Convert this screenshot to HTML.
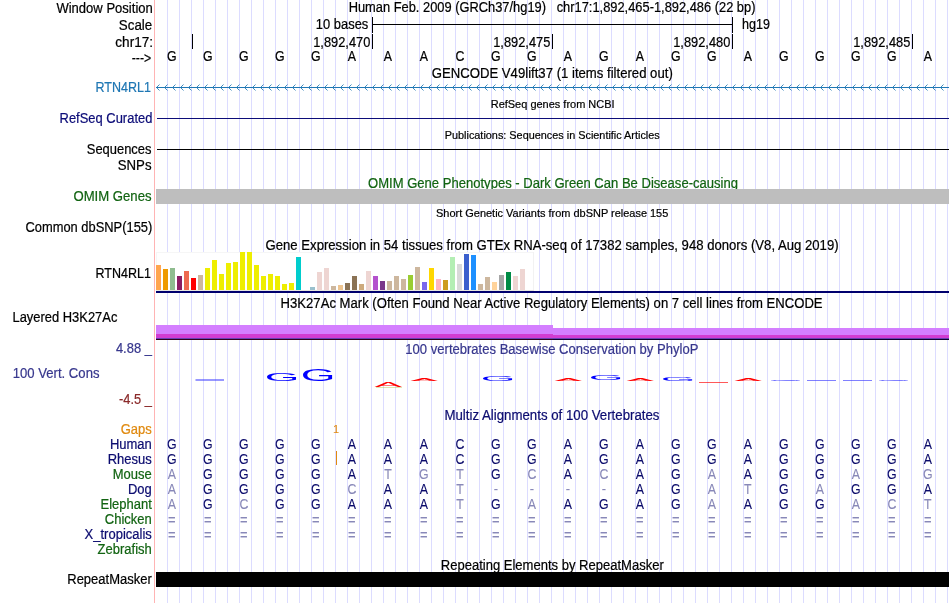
<!DOCTYPE html>
<html><head><meta charset="utf-8"><title>UCSC Genome Browser chr17:1,892,465-1,892,486</title>
<style>
html,body{margin:0;padding:0;background:#fff;}
body{width:950px;height:603px;overflow:hidden;}
svg{display:block;will-change:transform;font-family:"Liberation Sans", Arial, Helvetica, sans-serif;}
text{stroke-width:0.2px;}
text.t{stroke-width:0.08px;}
</style></head><body>
<svg width="950" height="603" viewBox="0 0 950 603">
<rect width="950" height="603" fill="#fff"/>
<g shape-rendering="crispEdges">
<rect x="154" y="0" width="1" height="603" fill="#ffb4b4"/>
<rect x="167" y="0" width="1" height="603" fill="#dcdcff"/>
<rect x="179" y="0" width="1" height="603" fill="#dcdcff"/>
<rect x="191" y="0" width="1" height="603" fill="#dcdcff"/>
<rect x="203" y="0" width="1" height="603" fill="#dcdcff"/>
<rect x="215" y="0" width="1" height="603" fill="#dcdcff"/>
<rect x="227" y="0" width="1" height="603" fill="#dcdcff"/>
<rect x="239" y="0" width="1" height="603" fill="#dcdcff"/>
<rect x="251" y="0" width="1" height="603" fill="#dcdcff"/>
<rect x="263" y="0" width="1" height="603" fill="#dcdcff"/>
<rect x="275" y="0" width="1" height="603" fill="#dcdcff"/>
<rect x="287" y="0" width="1" height="603" fill="#dcdcff"/>
<rect x="299" y="0" width="1" height="603" fill="#dcdcff"/>
<rect x="311" y="0" width="1" height="603" fill="#dcdcff"/>
<rect x="323" y="0" width="1" height="603" fill="#dcdcff"/>
<rect x="335" y="0" width="1" height="603" fill="#dcdcff"/>
<rect x="347" y="0" width="1" height="603" fill="#dcdcff"/>
<rect x="359" y="0" width="1" height="603" fill="#dcdcff"/>
<rect x="371" y="0" width="1" height="603" fill="#dcdcff"/>
<rect x="383" y="0" width="1" height="603" fill="#dcdcff"/>
<rect x="395" y="0" width="1" height="603" fill="#dcdcff"/>
<rect x="407" y="0" width="1" height="603" fill="#dcdcff"/>
<rect x="419" y="0" width="1" height="603" fill="#dcdcff"/>
<rect x="431" y="0" width="1" height="603" fill="#dcdcff"/>
<rect x="443" y="0" width="1" height="603" fill="#dcdcff"/>
<rect x="455" y="0" width="1" height="603" fill="#dcdcff"/>
<rect x="467" y="0" width="1" height="603" fill="#dcdcff"/>
<rect x="479" y="0" width="1" height="603" fill="#dcdcff"/>
<rect x="491" y="0" width="1" height="603" fill="#dcdcff"/>
<rect x="503" y="0" width="1" height="603" fill="#dcdcff"/>
<rect x="515" y="0" width="1" height="603" fill="#dcdcff"/>
<rect x="527" y="0" width="1" height="603" fill="#dcdcff"/>
<rect x="539" y="0" width="1" height="603" fill="#dcdcff"/>
<rect x="551" y="0" width="1" height="603" fill="#dcdcff"/>
<rect x="563" y="0" width="1" height="603" fill="#dcdcff"/>
<rect x="575" y="0" width="1" height="603" fill="#dcdcff"/>
<rect x="587" y="0" width="1" height="603" fill="#dcdcff"/>
<rect x="599" y="0" width="1" height="603" fill="#dcdcff"/>
<rect x="611" y="0" width="1" height="603" fill="#dcdcff"/>
<rect x="623" y="0" width="1" height="603" fill="#dcdcff"/>
<rect x="635" y="0" width="1" height="603" fill="#dcdcff"/>
<rect x="647" y="0" width="1" height="603" fill="#dcdcff"/>
<rect x="659" y="0" width="1" height="603" fill="#dcdcff"/>
<rect x="671" y="0" width="1" height="603" fill="#dcdcff"/>
<rect x="683" y="0" width="1" height="603" fill="#dcdcff"/>
<rect x="695" y="0" width="1" height="603" fill="#dcdcff"/>
<rect x="707" y="0" width="1" height="603" fill="#dcdcff"/>
<rect x="719" y="0" width="1" height="603" fill="#dcdcff"/>
<rect x="731" y="0" width="1" height="603" fill="#dcdcff"/>
<rect x="743" y="0" width="1" height="603" fill="#dcdcff"/>
<rect x="755" y="0" width="1" height="603" fill="#dcdcff"/>
<rect x="767" y="0" width="1" height="603" fill="#dcdcff"/>
<rect x="779" y="0" width="1" height="603" fill="#dcdcff"/>
<rect x="791" y="0" width="1" height="603" fill="#dcdcff"/>
<rect x="803" y="0" width="1" height="603" fill="#dcdcff"/>
<rect x="815" y="0" width="1" height="603" fill="#dcdcff"/>
<rect x="827" y="0" width="1" height="603" fill="#dcdcff"/>
<rect x="839" y="0" width="1" height="603" fill="#dcdcff"/>
<rect x="851" y="0" width="1" height="603" fill="#dcdcff"/>
<rect x="863" y="0" width="1" height="603" fill="#dcdcff"/>
<rect x="875" y="0" width="1" height="603" fill="#dcdcff"/>
<rect x="887" y="0" width="1" height="603" fill="#dcdcff"/>
<rect x="899" y="0" width="1" height="603" fill="#dcdcff"/>
<rect x="911" y="0" width="1" height="603" fill="#dcdcff"/>
<rect x="923" y="0" width="1" height="603" fill="#dcdcff"/>
<rect x="935" y="0" width="1" height="603" fill="#dcdcff"/>
<rect x="947" y="0" width="1" height="603" fill="#dcdcff"/>
</g>
<text x="56.4" y="13.0" font-size="13" fill="#000" stroke="#000" textLength="96.41" lengthAdjust="spacingAndGlyphs" transform="matrix(1 0 0 1.055 0 -0.71)">Window Position</text>
<text x="118.83" y="30.5" font-size="13" fill="#000" stroke="#000" textLength="33.43" lengthAdjust="spacingAndGlyphs" transform="matrix(1 0 0 1.055 0 -1.68)">Scale</text>
<text x="115.26" y="47.0" font-size="13" fill="#000" stroke="#000" textLength="37.86" lengthAdjust="spacingAndGlyphs" transform="matrix(1 0 0 1.055 0 -2.58)">chr17:</text>
<text x="131.7" y="62.8" font-size="13" fill="#000" stroke="#000" textLength="19.49" lengthAdjust="spacingAndGlyphs" transform="matrix(1 0 0 1.055 0 -3.45)">---&gt;</text>
<text x="348.68" y="12.5" font-size="13" fill="#000" stroke="#000" textLength="406.79" lengthAdjust="spacingAndGlyphs" style="white-space:pre" transform="matrix(1 0 0 1.055 0 -0.69)">Human Feb. 2009 (GRCh37/hg19)   chr17:1,892,465-1,892,486 (22 bp)</text>
<text x="315.77" y="29.0" font-size="13" fill="#000" stroke="#000" textLength="52.55" lengthAdjust="spacingAndGlyphs" transform="matrix(1 0 0 1.055 0 -1.59)">10 bases</text>
<text x="742.12" y="28.9" font-size="13" fill="#000" stroke="#000" textLength="28.0" lengthAdjust="spacingAndGlyphs" transform="matrix(1 0 0 1.055 0 -1.59)">hg19</text>
<g shape-rendering="crispEdges">
<rect x="372" y="17" width="1" height="16" fill="#000"/>
<rect x="732" y="17" width="1" height="16" fill="#000"/>
<rect x="372" y="24" width="361" height="1" fill="#000"/>
<rect x="192" y="34" width="1" height="15" fill="#000"/>
<rect x="372" y="34" width="1" height="15" fill="#000"/>
<rect x="552" y="34" width="1" height="15" fill="#000"/>
<rect x="732" y="34" width="1" height="15" fill="#000"/>
<rect x="912" y="34" width="1" height="15" fill="#000"/>
</g>
<text x="313.18" y="46.7" font-size="13" fill="#000" stroke="#000" textLength="57.13" lengthAdjust="spacingAndGlyphs" transform="matrix(1 0 0 1.055 0 -2.57)">1,892,470</text>
<text x="493.18" y="46.7" font-size="13" fill="#000" stroke="#000" textLength="57.13" lengthAdjust="spacingAndGlyphs" transform="matrix(1 0 0 1.055 0 -2.57)">1,892,475</text>
<text x="673.18" y="46.7" font-size="13" fill="#000" stroke="#000" textLength="57.13" lengthAdjust="spacingAndGlyphs" transform="matrix(1 0 0 1.055 0 -2.57)">1,892,480</text>
<text x="853.18" y="46.7" font-size="13" fill="#000" stroke="#000" textLength="57.13" lengthAdjust="spacingAndGlyphs" transform="matrix(1 0 0 1.055 0 -2.57)">1,892,485</text>
<g transform="scale(0.95 1.07)">
<text x="180.95" y="56.82" font-size="13" fill="#000" stroke="#000" text-anchor="middle">G</text>
<text x="218.84" y="56.82" font-size="13" fill="#000" stroke="#000" text-anchor="middle">G</text>
<text x="256.74" y="56.82" font-size="13" fill="#000" stroke="#000" text-anchor="middle">G</text>
<text x="294.63" y="56.82" font-size="13" fill="#000" stroke="#000" text-anchor="middle">G</text>
<text x="332.53" y="56.82" font-size="13" fill="#000" stroke="#000" text-anchor="middle">G</text>
<text x="370.42" y="56.82" font-size="13" fill="#000" stroke="#000" text-anchor="middle">A</text>
<text x="408.32" y="56.82" font-size="13" fill="#000" stroke="#000" text-anchor="middle">A</text>
<text x="446.21" y="56.82" font-size="13" fill="#000" stroke="#000" text-anchor="middle">A</text>
<text x="484.11" y="56.82" font-size="13" fill="#000" stroke="#000" text-anchor="middle">C</text>
<text x="522.0" y="56.82" font-size="13" fill="#000" stroke="#000" text-anchor="middle">G</text>
<text x="559.89" y="56.82" font-size="13" fill="#000" stroke="#000" text-anchor="middle">G</text>
<text x="597.79" y="56.82" font-size="13" fill="#000" stroke="#000" text-anchor="middle">A</text>
<text x="635.68" y="56.82" font-size="13" fill="#000" stroke="#000" text-anchor="middle">G</text>
<text x="673.58" y="56.82" font-size="13" fill="#000" stroke="#000" text-anchor="middle">A</text>
<text x="711.47" y="56.82" font-size="13" fill="#000" stroke="#000" text-anchor="middle">G</text>
<text x="749.37" y="56.82" font-size="13" fill="#000" stroke="#000" text-anchor="middle">G</text>
<text x="787.26" y="56.82" font-size="13" fill="#000" stroke="#000" text-anchor="middle">A</text>
<text x="825.16" y="56.82" font-size="13" fill="#000" stroke="#000" text-anchor="middle">G</text>
<text x="863.05" y="56.82" font-size="13" fill="#000" stroke="#000" text-anchor="middle">G</text>
<text x="900.95" y="56.82" font-size="13" fill="#000" stroke="#000" text-anchor="middle">G</text>
<text x="938.84" y="56.82" font-size="13" fill="#000" stroke="#000" text-anchor="middle">G</text>
<text x="976.74" y="56.82" font-size="13" fill="#000" stroke="#000" text-anchor="middle">A</text>
</g>
<text x="431.74" y="78.2" font-size="13" fill="#000" stroke="#000" textLength="241.04" lengthAdjust="spacingAndGlyphs" transform="matrix(1 0 0 1.055 0 -4.3)">GENCODE V49lift37 (1 items filtered out)</text>
<text x="95.5" y="92.0" font-size="13" fill="#1f77b4" stroke="#1f77b4" textLength="55.42" lengthAdjust="spacingAndGlyphs" transform="matrix(1 0 0 1.055 0 -5.06)">RTN4RL1</text>
<rect x="156" y="87" width="793" height="1" fill="#1f77b4" shape-rendering="crispEdges"/>
<path d="M159.5 84.5L156.5 87.5L159.5 90.5M167.5 84.5L164.5 87.5L167.5 90.5M175.5 84.5L172.5 87.5L175.5 90.5M183.5 84.5L180.5 87.5L183.5 90.5M191.5 84.5L188.5 87.5L191.5 90.5M199.5 84.5L196.5 87.5L199.5 90.5M207.5 84.5L204.5 87.5L207.5 90.5M215.5 84.5L212.5 87.5L215.5 90.5M223.5 84.5L220.5 87.5L223.5 90.5M231.5 84.5L228.5 87.5L231.5 90.5M239.5 84.5L236.5 87.5L239.5 90.5M247.5 84.5L244.5 87.5L247.5 90.5M255.5 84.5L252.5 87.5L255.5 90.5M263.5 84.5L260.5 87.5L263.5 90.5M271.5 84.5L268.5 87.5L271.5 90.5M279.5 84.5L276.5 87.5L279.5 90.5M287.5 84.5L284.5 87.5L287.5 90.5M295.5 84.5L292.5 87.5L295.5 90.5M303.5 84.5L300.5 87.5L303.5 90.5M311.5 84.5L308.5 87.5L311.5 90.5M319.5 84.5L316.5 87.5L319.5 90.5M327.5 84.5L324.5 87.5L327.5 90.5M335.5 84.5L332.5 87.5L335.5 90.5M343.5 84.5L340.5 87.5L343.5 90.5M351.5 84.5L348.5 87.5L351.5 90.5M359.5 84.5L356.5 87.5L359.5 90.5M367.5 84.5L364.5 87.5L367.5 90.5M375.5 84.5L372.5 87.5L375.5 90.5M383.5 84.5L380.5 87.5L383.5 90.5M391.5 84.5L388.5 87.5L391.5 90.5M399.5 84.5L396.5 87.5L399.5 90.5M407.5 84.5L404.5 87.5L407.5 90.5M415.5 84.5L412.5 87.5L415.5 90.5M423.5 84.5L420.5 87.5L423.5 90.5M431.5 84.5L428.5 87.5L431.5 90.5M439.5 84.5L436.5 87.5L439.5 90.5M447.5 84.5L444.5 87.5L447.5 90.5M455.5 84.5L452.5 87.5L455.5 90.5M463.5 84.5L460.5 87.5L463.5 90.5M471.5 84.5L468.5 87.5L471.5 90.5M479.5 84.5L476.5 87.5L479.5 90.5M487.5 84.5L484.5 87.5L487.5 90.5M495.5 84.5L492.5 87.5L495.5 90.5M503.5 84.5L500.5 87.5L503.5 90.5M511.5 84.5L508.5 87.5L511.5 90.5M519.5 84.5L516.5 87.5L519.5 90.5M527.5 84.5L524.5 87.5L527.5 90.5M535.5 84.5L532.5 87.5L535.5 90.5M543.5 84.5L540.5 87.5L543.5 90.5M551.5 84.5L548.5 87.5L551.5 90.5M559.5 84.5L556.5 87.5L559.5 90.5M567.5 84.5L564.5 87.5L567.5 90.5M575.5 84.5L572.5 87.5L575.5 90.5M583.5 84.5L580.5 87.5L583.5 90.5M591.5 84.5L588.5 87.5L591.5 90.5M599.5 84.5L596.5 87.5L599.5 90.5M607.5 84.5L604.5 87.5L607.5 90.5M615.5 84.5L612.5 87.5L615.5 90.5M623.5 84.5L620.5 87.5L623.5 90.5M631.5 84.5L628.5 87.5L631.5 90.5M639.5 84.5L636.5 87.5L639.5 90.5M647.5 84.5L644.5 87.5L647.5 90.5M655.5 84.5L652.5 87.5L655.5 90.5M663.5 84.5L660.5 87.5L663.5 90.5M671.5 84.5L668.5 87.5L671.5 90.5M679.5 84.5L676.5 87.5L679.5 90.5M687.5 84.5L684.5 87.5L687.5 90.5M695.5 84.5L692.5 87.5L695.5 90.5M703.5 84.5L700.5 87.5L703.5 90.5M711.5 84.5L708.5 87.5L711.5 90.5M719.5 84.5L716.5 87.5L719.5 90.5M727.5 84.5L724.5 87.5L727.5 90.5M735.5 84.5L732.5 87.5L735.5 90.5M743.5 84.5L740.5 87.5L743.5 90.5M751.5 84.5L748.5 87.5L751.5 90.5M759.5 84.5L756.5 87.5L759.5 90.5M767.5 84.5L764.5 87.5L767.5 90.5M775.5 84.5L772.5 87.5L775.5 90.5M783.5 84.5L780.5 87.5L783.5 90.5M791.5 84.5L788.5 87.5L791.5 90.5M799.5 84.5L796.5 87.5L799.5 90.5M807.5 84.5L804.5 87.5L807.5 90.5M815.5 84.5L812.5 87.5L815.5 90.5M823.5 84.5L820.5 87.5L823.5 90.5M831.5 84.5L828.5 87.5L831.5 90.5M839.5 84.5L836.5 87.5L839.5 90.5M847.5 84.5L844.5 87.5L847.5 90.5M855.5 84.5L852.5 87.5L855.5 90.5M863.5 84.5L860.5 87.5L863.5 90.5M871.5 84.5L868.5 87.5L871.5 90.5M879.5 84.5L876.5 87.5L879.5 90.5M887.5 84.5L884.5 87.5L887.5 90.5M895.5 84.5L892.5 87.5L895.5 90.5M903.5 84.5L900.5 87.5L903.5 90.5M911.5 84.5L908.5 87.5L911.5 90.5M919.5 84.5L916.5 87.5L919.5 90.5M927.5 84.5L924.5 87.5L927.5 90.5M935.5 84.5L932.5 87.5L935.5 90.5M943.5 84.5L940.5 87.5L943.5 90.5" fill="none" stroke="#1f77b4" stroke-width="0.85"/>
<text x="490.72" y="108.2" font-size="11" fill="#000" stroke="#000" textLength="123.86" lengthAdjust="spacingAndGlyphs" transform="matrix(1 0 0 1.055 0 -5.95)">RefSeq genes from NCBI</text>
<text x="59.57" y="123.1" font-size="13" fill="#0c0c78" stroke="#0c0c78" textLength="92.83" lengthAdjust="spacingAndGlyphs" transform="matrix(1 0 0 1.055 0 -6.77)">RefSeq Curated</text>
<rect x="157" y="118" width="792" height="1" fill="#0c0c78" shape-rendering="crispEdges"/>
<text x="444.74" y="139.5" font-size="11" fill="#000" stroke="#000" textLength="214.99" lengthAdjust="spacingAndGlyphs" transform="matrix(1 0 0 1.055 0 -7.67)">Publications: Sequences in Scientific Articles</text>
<text x="86.76" y="154.0" font-size="13" fill="#000" stroke="#000" textLength="64.76" lengthAdjust="spacingAndGlyphs" transform="matrix(1 0 0 1.055 0 -8.47)">Sequences</text>
<rect x="157" y="149" width="792" height="1" fill="#000" shape-rendering="crispEdges"/>
<text x="117.74" y="170.0" font-size="13" fill="#000" stroke="#000" textLength="33.79" lengthAdjust="spacingAndGlyphs" transform="matrix(1 0 0 1.055 0 -9.35)">SNPs</text>
<text x="368.05" y="187.9" font-size="13" fill="#126412" stroke="#126412" textLength="369.96" lengthAdjust="spacingAndGlyphs" transform="matrix(1 0 0 1.055 0 -10.33)">OMIM Gene Phenotypes - Dark Green Can Be Disease-causing</text>
<text x="73.44" y="201.1" font-size="13" fill="#126412" stroke="#126412" textLength="78.08" lengthAdjust="spacingAndGlyphs" transform="matrix(1 0 0 1.055 0 -11.06)">OMIM Genes</text>
<rect x="156" y="189" width="793" height="15" fill="#bebebe" shape-rendering="crispEdges"/>
<text x="436.06" y="217.5" font-size="11" fill="#000" stroke="#000" textLength="232.26" lengthAdjust="spacingAndGlyphs" transform="matrix(1 0 0 1.055 0 -11.96)">Short Genetic Variants from dbSNP release 155</text>
<text x="25.46" y="231.9" font-size="13" fill="#000" stroke="#000" textLength="126.81" lengthAdjust="spacingAndGlyphs" transform="matrix(1 0 0 1.055 0 -12.75)">Common dbSNP(155)</text>
<text x="265.55" y="249.8" font-size="13" fill="#000" stroke="#000" textLength="573.02" lengthAdjust="spacingAndGlyphs" transform="matrix(1 0 0 1.055 0 -13.74)">Gene Expression in 54 tissues from GTEx RNA-seq of 17382 samples, 948 donors (V8, Aug 2019)</text>
<text x="95.5" y="278.1" font-size="13" fill="#000" stroke="#000" textLength="55.42" lengthAdjust="spacingAndGlyphs" transform="matrix(1 0 0 1.055 0 -15.3)">RTN4RL1</text>
<g shape-rendering="crispEdges">
<rect x="156" y="252" width="378" height="39" fill="#fff"/>
<rect x="156" y="252" width="378" height="1" fill="#f6f6f6"/>
<rect x="156" y="252" width="1" height="39" fill="#f6f6f6"/>
<rect x="533" y="252" width="1" height="39" fill="#f2f2f2"/>
<rect x="156" y="290" width="378" height="1" fill="#e8e8e0"/>
<rect x="156" y="265" width="5" height="25" fill="#FFA54F"/>
<rect x="163" y="269" width="5" height="21" fill="#EE9A00"/>
<rect x="170" y="268" width="5" height="22" fill="#8FBC8F"/>
<rect x="177" y="276" width="5" height="14" fill="#8B1C62"/>
<rect x="184" y="271" width="5" height="19" fill="#EE6A50"/>
<rect x="191" y="278" width="5" height="12" fill="#FF0000"/>
<rect x="198" y="275" width="5" height="15" fill="#CDB79E"/>
<rect x="205" y="268" width="5" height="22" fill="#EEEE00"/>
<rect x="212" y="260" width="5" height="30" fill="#EEEE00"/>
<rect x="219" y="274" width="5" height="16" fill="#EEEE00"/>
<rect x="226" y="263" width="5" height="27" fill="#EEEE00"/>
<rect x="233" y="262" width="5" height="28" fill="#EEEE00"/>
<rect x="240" y="252" width="5" height="38" fill="#EEEE00"/>
<rect x="247" y="252" width="5" height="38" fill="#EEEE00"/>
<rect x="254" y="265" width="5" height="25" fill="#EEEE00"/>
<rect x="261" y="276" width="5" height="14" fill="#EEEE00"/>
<rect x="268" y="274" width="5" height="16" fill="#EEEE00"/>
<rect x="275" y="276" width="5" height="14" fill="#EEEE00"/>
<rect x="282" y="284" width="5" height="6" fill="#EEEE00"/>
<rect x="289" y="283" width="5" height="7" fill="#EEEE00"/>
<rect x="296" y="257" width="5" height="33" fill="#00CDCD"/>
<rect x="310" y="287" width="5" height="3" fill="#9AC0CD"/>
<rect x="317" y="272" width="5" height="18" fill="#EED5D2"/>
<rect x="324" y="268" width="5" height="22" fill="#EED5D2"/>
<rect x="331" y="286" width="5" height="4" fill="#CDB79E"/>
<rect x="338" y="285" width="5" height="5" fill="#EEC591"/>
<rect x="345" y="283" width="5" height="7" fill="#8B7355"/>
<rect x="352" y="276" width="5" height="14" fill="#8B7355"/>
<rect x="359" y="284" width="5" height="6" fill="#CDAA7D"/>
<rect x="366" y="271" width="5" height="19" fill="#EED5D2"/>
<rect x="373" y="276" width="5" height="14" fill="#B452CD"/>
<rect x="380" y="281" width="5" height="9" fill="#7A378B"/>
<rect x="387" y="281" width="5" height="9" fill="#CDB79E"/>
<rect x="394" y="276" width="5" height="14" fill="#CDB79E"/>
<rect x="401" y="279" width="5" height="11" fill="#CDB79E"/>
<rect x="408" y="275" width="5" height="15" fill="#9ACD32"/>
<rect x="415" y="267" width="5" height="23" fill="#CDB79E"/>
<rect x="422" y="282" width="5" height="8" fill="#7A67EE"/>
<rect x="429" y="268" width="5" height="22" fill="#FFD700"/>
<rect x="436" y="279" width="5" height="11" fill="#FFB6C1"/>
<rect x="443" y="280" width="5" height="10" fill="#CD9B1D"/>
<rect x="450" y="257" width="5" height="33" fill="#B4EEB4"/>
<rect x="457" y="264" width="5" height="26" fill="#D9D9D9"/>
<rect x="464" y="254" width="5" height="36" fill="#3A5FCD"/>
<rect x="471" y="255" width="5" height="35" fill="#1E90FF"/>
<rect x="478" y="284" width="5" height="6" fill="#CDB79E"/>
<rect x="485" y="277" width="5" height="13" fill="#CDB79E"/>
<rect x="492" y="282" width="5" height="8" fill="#FFD39B"/>
<rect x="499" y="275" width="5" height="15" fill="#A6A6A6"/>
<rect x="506" y="272" width="5" height="18" fill="#008B45"/>
<rect x="513" y="276" width="5" height="14" fill="#EED5D2"/>
<rect x="520" y="269" width="5" height="21" fill="#EED5D2"/>
<rect x="156" y="291" width="793" height="2" fill="#00006e"/>
</g>
<text x="280.56" y="308.5" font-size="13" fill="#000" stroke="#000" textLength="542.05" lengthAdjust="spacingAndGlyphs" transform="matrix(1 0 0 1.055 0 -16.97)">H3K27Ac Mark (Often Found Near Active Regulatory Elements) on 7 cell lines from ENCODE</text>
<text x="12.47" y="322.4" font-size="13" fill="#000" stroke="#000" textLength="104.92" lengthAdjust="spacingAndGlyphs" transform="matrix(1 0 0 1.055 0 -17.73)">Layered H3K27Ac</text>
<g shape-rendering="crispEdges">
<rect x="156" y="325" width="397" height="9" fill="#d47fff"/>
<rect x="156" y="334" width="397" height="4" fill="#d23cd2"/>
<rect x="553" y="328" width="396" height="7" fill="#d47fff"/>
<rect x="553" y="335" width="396" height="3" fill="#d23cd2"/>
<rect x="156" y="338" width="793" height="1" fill="#6a3fb5"/>
<rect x="156" y="339" width="397" height="1" fill="#30001c"/>
<rect x="553" y="339" width="396" height="1" fill="#100030"/>
</g>
<text x="405.36" y="354.0" font-size="13" fill="#38388e" stroke="#38388e" textLength="292.99" lengthAdjust="spacingAndGlyphs" transform="matrix(1 0 0 1.055 0 -19.47)">100 vertebrates Basewise Conservation by PhyloP</text>
<text x="115.94" y="353.1" font-size="13" fill="#38388e" stroke="#38388e" textLength="35.93" lengthAdjust="spacingAndGlyphs" transform="matrix(1 0 0 1.055 0 -19.42)">4.88 _</text>
<text x="12.76" y="378.3" font-size="13" fill="#38388e" stroke="#38388e" textLength="86.74" lengthAdjust="spacingAndGlyphs" transform="matrix(1 0 0 1.055 0 -20.81)">100 Vert. Cons</text>
<text x="118.99" y="403.6" font-size="13" fill="#8b2a2a" stroke="#8b2a2a" textLength="32.88" lengthAdjust="spacingAndGlyphs" transform="matrix(1 0 0 1.055 0 -22.2)">-4.5 _</text>
<rect x="195.5" y="379.3" width="28.5" height="1.4" fill="#3c3cff" opacity="0.75"/>
<text transform="matrix(0.4458 0 0 0.1026 264.68 381.39)" font-size="100" fill="#0000ff">G</text>
<text transform="matrix(0.4458 0 0 0.1565 300.68 381.23)" font-size="100" fill="#0000ff">G</text>
<text transform="matrix(0.4123 0 0 0.0799 374.50 387.30)" font-size="100" fill="#ff0000">A</text>
<text transform="matrix(0.4123 0 0 0.0262 410.50 381.00)" font-size="100" fill="#ff0000">A</text>
<text transform="matrix(0.4458 0 0 0.0783 480.68 381.11)" font-size="100" fill="#0000ff">G</text>
<text transform="matrix(0.4123 0 0 0.0436 554.50 381.00)" font-size="100" fill="#ff0000">A</text>
<text transform="matrix(0.4458 0 0 0.0742 588.68 380.42)" font-size="100" fill="#0000ff">G</text>
<text transform="matrix(0.4123 0 0 0.0436 626.50 381.00)" font-size="100" fill="#ff0000">A</text>
<text transform="matrix(0.4458 0 0 0.0472 660.68 380.95)" font-size="100" fill="#0000ff">G</text>
<rect x="699" y="382" width="29" height="1" fill="#ff0000" shape-rendering="crispEdges" opacity="0.65"/>
<text transform="matrix(0.4123 0 0 0.0262 734.50 381.00)" font-size="100" fill="#ff0000">A</text>
<text transform="matrix(0.4458 0 0 0.0229 768.68 380.97)" font-size="100" fill="#0000ff">G</text>
<rect x="807" y="380" width="29" height="1" fill="#3c3cff" shape-rendering="crispEdges" opacity="0.65"/>
<rect x="843" y="380" width="29" height="1" fill="#3c3cff" shape-rendering="crispEdges" opacity="0.65"/>
<text transform="matrix(0.4458 0 0 0.0229 876.68 380.97)" font-size="100" fill="#0000ff">G</text>
<rect x="376" y="387" width="26" height="1" fill="#b4c850" shape-rendering="crispEdges" opacity="0.45"/>
<text x="444.45" y="420.3" font-size="13" fill="#0c0c70" stroke="#0c0c70" textLength="215.05" lengthAdjust="spacingAndGlyphs" transform="matrix(1 0 0 1.055 0 -23.12)">Multiz Alignments of 100 Vertebrates</text>
<text x="151.8" y="434.3" font-size="13" fill="#e08a10" stroke="#e08a10" text-anchor="end" transform="matrix(1 0 0 1.055 0 -23.89)">Gaps</text>
<text x="151.8" y="449.3" font-size="13" fill="#0c0c70" stroke="#0c0c70" text-anchor="end" transform="matrix(1 0 0 1.055 0 -24.71)">Human</text>
<text x="180.95" y="419.25" font-size="13" fill="#0a0a6a" stroke="#0a0a6a" text-anchor="middle" class="t" transform="scale(0.95 1.07)">G</text>
<text x="218.84" y="419.25" font-size="13" fill="#0a0a6a" stroke="#0a0a6a" text-anchor="middle" class="t" transform="scale(0.95 1.07)">G</text>
<text x="256.74" y="419.25" font-size="13" fill="#0a0a6a" stroke="#0a0a6a" text-anchor="middle" class="t" transform="scale(0.95 1.07)">G</text>
<text x="294.63" y="419.25" font-size="13" fill="#0a0a6a" stroke="#0a0a6a" text-anchor="middle" class="t" transform="scale(0.95 1.07)">G</text>
<text x="332.53" y="419.25" font-size="13" fill="#0a0a6a" stroke="#0a0a6a" text-anchor="middle" class="t" transform="scale(0.95 1.07)">G</text>
<text x="370.42" y="419.25" font-size="13" fill="#0a0a6a" stroke="#0a0a6a" text-anchor="middle" class="t" transform="scale(0.95 1.07)">A</text>
<text x="408.32" y="419.25" font-size="13" fill="#0a0a6a" stroke="#0a0a6a" text-anchor="middle" class="t" transform="scale(0.95 1.07)">A</text>
<text x="446.21" y="419.25" font-size="13" fill="#0a0a6a" stroke="#0a0a6a" text-anchor="middle" class="t" transform="scale(0.95 1.07)">A</text>
<text x="484.11" y="419.25" font-size="13" fill="#0a0a6a" stroke="#0a0a6a" text-anchor="middle" class="t" transform="scale(0.95 1.07)">C</text>
<text x="522.0" y="419.25" font-size="13" fill="#0a0a6a" stroke="#0a0a6a" text-anchor="middle" class="t" transform="scale(0.95 1.07)">G</text>
<text x="559.89" y="419.25" font-size="13" fill="#0a0a6a" stroke="#0a0a6a" text-anchor="middle" class="t" transform="scale(0.95 1.07)">G</text>
<text x="597.79" y="419.25" font-size="13" fill="#0a0a6a" stroke="#0a0a6a" text-anchor="middle" class="t" transform="scale(0.95 1.07)">A</text>
<text x="635.68" y="419.25" font-size="13" fill="#0a0a6a" stroke="#0a0a6a" text-anchor="middle" class="t" transform="scale(0.95 1.07)">G</text>
<text x="673.58" y="419.25" font-size="13" fill="#0a0a6a" stroke="#0a0a6a" text-anchor="middle" class="t" transform="scale(0.95 1.07)">A</text>
<text x="711.47" y="419.25" font-size="13" fill="#0a0a6a" stroke="#0a0a6a" text-anchor="middle" class="t" transform="scale(0.95 1.07)">G</text>
<text x="749.37" y="419.25" font-size="13" fill="#0a0a6a" stroke="#0a0a6a" text-anchor="middle" class="t" transform="scale(0.95 1.07)">G</text>
<text x="787.26" y="419.25" font-size="13" fill="#0a0a6a" stroke="#0a0a6a" text-anchor="middle" class="t" transform="scale(0.95 1.07)">A</text>
<text x="825.16" y="419.25" font-size="13" fill="#0a0a6a" stroke="#0a0a6a" text-anchor="middle" class="t" transform="scale(0.95 1.07)">G</text>
<text x="863.05" y="419.25" font-size="13" fill="#0a0a6a" stroke="#0a0a6a" text-anchor="middle" class="t" transform="scale(0.95 1.07)">G</text>
<text x="900.95" y="419.25" font-size="13" fill="#0a0a6a" stroke="#0a0a6a" text-anchor="middle" class="t" transform="scale(0.95 1.07)">G</text>
<text x="938.84" y="419.25" font-size="13" fill="#0a0a6a" stroke="#0a0a6a" text-anchor="middle" class="t" transform="scale(0.95 1.07)">G</text>
<text x="976.74" y="419.25" font-size="13" fill="#0a0a6a" stroke="#0a0a6a" text-anchor="middle" class="t" transform="scale(0.95 1.07)">A</text>
<text x="151.8" y="464.3" font-size="13" fill="#0c0c70" stroke="#0c0c70" text-anchor="end" transform="matrix(1 0 0 1.055 0 -25.54)">Rhesus</text>
<text x="180.95" y="433.27" font-size="13" fill="#0a0a6a" stroke="#0a0a6a" text-anchor="middle" class="t" transform="scale(0.95 1.07)">G</text>
<text x="218.84" y="433.27" font-size="13" fill="#0a0a6a" stroke="#0a0a6a" text-anchor="middle" class="t" transform="scale(0.95 1.07)">G</text>
<text x="256.74" y="433.27" font-size="13" fill="#0a0a6a" stroke="#0a0a6a" text-anchor="middle" class="t" transform="scale(0.95 1.07)">G</text>
<text x="294.63" y="433.27" font-size="13" fill="#0a0a6a" stroke="#0a0a6a" text-anchor="middle" class="t" transform="scale(0.95 1.07)">G</text>
<text x="332.53" y="433.27" font-size="13" fill="#0a0a6a" stroke="#0a0a6a" text-anchor="middle" class="t" transform="scale(0.95 1.07)">G</text>
<text x="370.42" y="433.27" font-size="13" fill="#0a0a6a" stroke="#0a0a6a" text-anchor="middle" class="t" transform="scale(0.95 1.07)">A</text>
<text x="408.32" y="433.27" font-size="13" fill="#0a0a6a" stroke="#0a0a6a" text-anchor="middle" class="t" transform="scale(0.95 1.07)">A</text>
<text x="446.21" y="433.27" font-size="13" fill="#0a0a6a" stroke="#0a0a6a" text-anchor="middle" class="t" transform="scale(0.95 1.07)">A</text>
<text x="484.11" y="433.27" font-size="13" fill="#0a0a6a" stroke="#0a0a6a" text-anchor="middle" class="t" transform="scale(0.95 1.07)">C</text>
<text x="522.0" y="433.27" font-size="13" fill="#0a0a6a" stroke="#0a0a6a" text-anchor="middle" class="t" transform="scale(0.95 1.07)">G</text>
<text x="559.89" y="433.27" font-size="13" fill="#0a0a6a" stroke="#0a0a6a" text-anchor="middle" class="t" transform="scale(0.95 1.07)">G</text>
<text x="597.79" y="433.27" font-size="13" fill="#0a0a6a" stroke="#0a0a6a" text-anchor="middle" class="t" transform="scale(0.95 1.07)">A</text>
<text x="635.68" y="433.27" font-size="13" fill="#0a0a6a" stroke="#0a0a6a" text-anchor="middle" class="t" transform="scale(0.95 1.07)">G</text>
<text x="673.58" y="433.27" font-size="13" fill="#0a0a6a" stroke="#0a0a6a" text-anchor="middle" class="t" transform="scale(0.95 1.07)">A</text>
<text x="711.47" y="433.27" font-size="13" fill="#0a0a6a" stroke="#0a0a6a" text-anchor="middle" class="t" transform="scale(0.95 1.07)">G</text>
<text x="749.37" y="433.27" font-size="13" fill="#0a0a6a" stroke="#0a0a6a" text-anchor="middle" class="t" transform="scale(0.95 1.07)">G</text>
<text x="787.26" y="433.27" font-size="13" fill="#0a0a6a" stroke="#0a0a6a" text-anchor="middle" class="t" transform="scale(0.95 1.07)">A</text>
<text x="825.16" y="433.27" font-size="13" fill="#0a0a6a" stroke="#0a0a6a" text-anchor="middle" class="t" transform="scale(0.95 1.07)">G</text>
<text x="863.05" y="433.27" font-size="13" fill="#0a0a6a" stroke="#0a0a6a" text-anchor="middle" class="t" transform="scale(0.95 1.07)">G</text>
<text x="900.95" y="433.27" font-size="13" fill="#0a0a6a" stroke="#0a0a6a" text-anchor="middle" class="t" transform="scale(0.95 1.07)">G</text>
<text x="938.84" y="433.27" font-size="13" fill="#0a0a6a" stroke="#0a0a6a" text-anchor="middle" class="t" transform="scale(0.95 1.07)">G</text>
<text x="976.74" y="433.27" font-size="13" fill="#0a0a6a" stroke="#0a0a6a" text-anchor="middle" class="t" transform="scale(0.95 1.07)">A</text>
<text x="151.8" y="479.3" font-size="13" fill="#126412" stroke="#126412" text-anchor="end" transform="matrix(1 0 0 1.055 0 -26.36)">Mouse</text>
<text x="180.95" y="447.29" font-size="13" fill="#8888b8" stroke="#8888b8" text-anchor="middle" class="t" transform="scale(0.95 1.07)">A</text>
<text x="218.84" y="447.29" font-size="13" fill="#0a0a6a" stroke="#0a0a6a" text-anchor="middle" class="t" transform="scale(0.95 1.07)">G</text>
<text x="256.74" y="447.29" font-size="13" fill="#0a0a6a" stroke="#0a0a6a" text-anchor="middle" class="t" transform="scale(0.95 1.07)">G</text>
<text x="294.63" y="447.29" font-size="13" fill="#0a0a6a" stroke="#0a0a6a" text-anchor="middle" class="t" transform="scale(0.95 1.07)">G</text>
<text x="332.53" y="447.29" font-size="13" fill="#0a0a6a" stroke="#0a0a6a" text-anchor="middle" class="t" transform="scale(0.95 1.07)">G</text>
<text x="370.42" y="447.29" font-size="13" fill="#0a0a6a" stroke="#0a0a6a" text-anchor="middle" class="t" transform="scale(0.95 1.07)">A</text>
<text x="408.32" y="447.29" font-size="13" fill="#8888b8" stroke="#8888b8" text-anchor="middle" class="t" transform="scale(0.95 1.07)">T</text>
<text x="446.21" y="447.29" font-size="13" fill="#8888b8" stroke="#8888b8" text-anchor="middle" class="t" transform="scale(0.95 1.07)">G</text>
<text x="484.11" y="447.29" font-size="13" fill="#8888b8" stroke="#8888b8" text-anchor="middle" class="t" transform="scale(0.95 1.07)">T</text>
<text x="522.0" y="447.29" font-size="13" fill="#0a0a6a" stroke="#0a0a6a" text-anchor="middle" class="t" transform="scale(0.95 1.07)">G</text>
<text x="559.89" y="447.29" font-size="13" fill="#8888b8" stroke="#8888b8" text-anchor="middle" class="t" transform="scale(0.95 1.07)">C</text>
<text x="597.79" y="447.29" font-size="13" fill="#0a0a6a" stroke="#0a0a6a" text-anchor="middle" class="t" transform="scale(0.95 1.07)">A</text>
<text x="635.68" y="447.29" font-size="13" fill="#8888b8" stroke="#8888b8" text-anchor="middle" class="t" transform="scale(0.95 1.07)">C</text>
<text x="673.58" y="447.29" font-size="13" fill="#0a0a6a" stroke="#0a0a6a" text-anchor="middle" class="t" transform="scale(0.95 1.07)">A</text>
<text x="711.47" y="447.29" font-size="13" fill="#0a0a6a" stroke="#0a0a6a" text-anchor="middle" class="t" transform="scale(0.95 1.07)">G</text>
<text x="749.37" y="447.29" font-size="13" fill="#8888b8" stroke="#8888b8" text-anchor="middle" class="t" transform="scale(0.95 1.07)">A</text>
<text x="787.26" y="447.29" font-size="13" fill="#0a0a6a" stroke="#0a0a6a" text-anchor="middle" class="t" transform="scale(0.95 1.07)">A</text>
<text x="825.16" y="447.29" font-size="13" fill="#0a0a6a" stroke="#0a0a6a" text-anchor="middle" class="t" transform="scale(0.95 1.07)">G</text>
<text x="863.05" y="447.29" font-size="13" fill="#0a0a6a" stroke="#0a0a6a" text-anchor="middle" class="t" transform="scale(0.95 1.07)">G</text>
<text x="900.95" y="447.29" font-size="13" fill="#8888b8" stroke="#8888b8" text-anchor="middle" class="t" transform="scale(0.95 1.07)">A</text>
<text x="938.84" y="447.29" font-size="13" fill="#0a0a6a" stroke="#0a0a6a" text-anchor="middle" class="t" transform="scale(0.95 1.07)">G</text>
<text x="976.74" y="447.29" font-size="13" fill="#8888b8" stroke="#8888b8" text-anchor="middle" class="t" transform="scale(0.95 1.07)">G</text>
<text x="151.8" y="494.3" font-size="13" fill="#0c0c70" stroke="#0c0c70" text-anchor="end" transform="matrix(1 0 0 1.055 0 -27.19)">Dog</text>
<text x="180.95" y="461.31" font-size="13" fill="#8888b8" stroke="#8888b8" text-anchor="middle" class="t" transform="scale(0.95 1.07)">A</text>
<text x="218.84" y="461.31" font-size="13" fill="#0a0a6a" stroke="#0a0a6a" text-anchor="middle" class="t" transform="scale(0.95 1.07)">G</text>
<text x="256.74" y="461.31" font-size="13" fill="#0a0a6a" stroke="#0a0a6a" text-anchor="middle" class="t" transform="scale(0.95 1.07)">G</text>
<text x="294.63" y="461.31" font-size="13" fill="#0a0a6a" stroke="#0a0a6a" text-anchor="middle" class="t" transform="scale(0.95 1.07)">G</text>
<text x="332.53" y="461.31" font-size="13" fill="#0a0a6a" stroke="#0a0a6a" text-anchor="middle" class="t" transform="scale(0.95 1.07)">G</text>
<text x="370.42" y="461.31" font-size="13" fill="#8888b8" stroke="#8888b8" text-anchor="middle" class="t" transform="scale(0.95 1.07)">C</text>
<text x="408.32" y="461.31" font-size="13" fill="#0a0a6a" stroke="#0a0a6a" text-anchor="middle" class="t" transform="scale(0.95 1.07)">A</text>
<text x="446.21" y="461.31" font-size="13" fill="#0a0a6a" stroke="#0a0a6a" text-anchor="middle" class="t" transform="scale(0.95 1.07)">A</text>
<text x="484.11" y="461.31" font-size="13" fill="#8888b8" stroke="#8888b8" text-anchor="middle" class="t" transform="scale(0.95 1.07)">T</text>
<text x="495.9" y="494.1" font-size="13" fill="#8888b8" stroke="#8888b8" text-anchor="middle" class="t" transform="matrix(1 0 0 1.055 0 -27.18)">-</text>
<text x="531.9" y="494.1" font-size="13" fill="#8888b8" stroke="#8888b8" text-anchor="middle" class="t" transform="matrix(1 0 0 1.055 0 -27.18)">-</text>
<text x="567.9" y="494.1" font-size="13" fill="#8888b8" stroke="#8888b8" text-anchor="middle" class="t" transform="matrix(1 0 0 1.055 0 -27.18)">-</text>
<text x="603.9" y="494.1" font-size="13" fill="#8888b8" stroke="#8888b8" text-anchor="middle" class="t" transform="matrix(1 0 0 1.055 0 -27.18)">-</text>
<text x="673.58" y="461.31" font-size="13" fill="#0a0a6a" stroke="#0a0a6a" text-anchor="middle" class="t" transform="scale(0.95 1.07)">A</text>
<text x="711.47" y="461.31" font-size="13" fill="#0a0a6a" stroke="#0a0a6a" text-anchor="middle" class="t" transform="scale(0.95 1.07)">G</text>
<text x="749.37" y="461.31" font-size="13" fill="#8888b8" stroke="#8888b8" text-anchor="middle" class="t" transform="scale(0.95 1.07)">A</text>
<text x="787.26" y="461.31" font-size="13" fill="#8888b8" stroke="#8888b8" text-anchor="middle" class="t" transform="scale(0.95 1.07)">T</text>
<text x="825.16" y="461.31" font-size="13" fill="#0a0a6a" stroke="#0a0a6a" text-anchor="middle" class="t" transform="scale(0.95 1.07)">G</text>
<text x="863.05" y="461.31" font-size="13" fill="#8888b8" stroke="#8888b8" text-anchor="middle" class="t" transform="scale(0.95 1.07)">A</text>
<text x="900.95" y="461.31" font-size="13" fill="#0a0a6a" stroke="#0a0a6a" text-anchor="middle" class="t" transform="scale(0.95 1.07)">G</text>
<text x="938.84" y="461.31" font-size="13" fill="#0a0a6a" stroke="#0a0a6a" text-anchor="middle" class="t" transform="scale(0.95 1.07)">G</text>
<text x="976.74" y="461.31" font-size="13" fill="#0a0a6a" stroke="#0a0a6a" text-anchor="middle" class="t" transform="scale(0.95 1.07)">A</text>
<text x="151.8" y="509.3" font-size="13" fill="#126412" stroke="#126412" text-anchor="end" transform="matrix(1 0 0 1.055 0 -28.01)">Elephant</text>
<text x="180.95" y="475.33" font-size="13" fill="#8888b8" stroke="#8888b8" text-anchor="middle" class="t" transform="scale(0.95 1.07)">A</text>
<text x="218.84" y="475.33" font-size="13" fill="#0a0a6a" stroke="#0a0a6a" text-anchor="middle" class="t" transform="scale(0.95 1.07)">G</text>
<text x="256.74" y="475.33" font-size="13" fill="#8888b8" stroke="#8888b8" text-anchor="middle" class="t" transform="scale(0.95 1.07)">C</text>
<text x="294.63" y="475.33" font-size="13" fill="#0a0a6a" stroke="#0a0a6a" text-anchor="middle" class="t" transform="scale(0.95 1.07)">G</text>
<text x="332.53" y="475.33" font-size="13" fill="#0a0a6a" stroke="#0a0a6a" text-anchor="middle" class="t" transform="scale(0.95 1.07)">G</text>
<text x="370.42" y="475.33" font-size="13" fill="#0a0a6a" stroke="#0a0a6a" text-anchor="middle" class="t" transform="scale(0.95 1.07)">A</text>
<text x="408.32" y="475.33" font-size="13" fill="#0a0a6a" stroke="#0a0a6a" text-anchor="middle" class="t" transform="scale(0.95 1.07)">A</text>
<text x="446.21" y="475.33" font-size="13" fill="#0a0a6a" stroke="#0a0a6a" text-anchor="middle" class="t" transform="scale(0.95 1.07)">A</text>
<text x="484.11" y="475.33" font-size="13" fill="#8888b8" stroke="#8888b8" text-anchor="middle" class="t" transform="scale(0.95 1.07)">T</text>
<text x="522.0" y="475.33" font-size="13" fill="#0a0a6a" stroke="#0a0a6a" text-anchor="middle" class="t" transform="scale(0.95 1.07)">G</text>
<text x="559.89" y="475.33" font-size="13" fill="#8888b8" stroke="#8888b8" text-anchor="middle" class="t" transform="scale(0.95 1.07)">A</text>
<text x="597.79" y="475.33" font-size="13" fill="#0a0a6a" stroke="#0a0a6a" text-anchor="middle" class="t" transform="scale(0.95 1.07)">A</text>
<text x="635.68" y="475.33" font-size="13" fill="#0a0a6a" stroke="#0a0a6a" text-anchor="middle" class="t" transform="scale(0.95 1.07)">G</text>
<text x="673.58" y="475.33" font-size="13" fill="#0a0a6a" stroke="#0a0a6a" text-anchor="middle" class="t" transform="scale(0.95 1.07)">A</text>
<text x="711.47" y="475.33" font-size="13" fill="#0a0a6a" stroke="#0a0a6a" text-anchor="middle" class="t" transform="scale(0.95 1.07)">G</text>
<text x="749.37" y="475.33" font-size="13" fill="#8888b8" stroke="#8888b8" text-anchor="middle" class="t" transform="scale(0.95 1.07)">A</text>
<text x="787.26" y="475.33" font-size="13" fill="#0a0a6a" stroke="#0a0a6a" text-anchor="middle" class="t" transform="scale(0.95 1.07)">A</text>
<text x="825.16" y="475.33" font-size="13" fill="#0a0a6a" stroke="#0a0a6a" text-anchor="middle" class="t" transform="scale(0.95 1.07)">G</text>
<text x="863.05" y="475.33" font-size="13" fill="#0a0a6a" stroke="#0a0a6a" text-anchor="middle" class="t" transform="scale(0.95 1.07)">G</text>
<text x="900.95" y="475.33" font-size="13" fill="#8888b8" stroke="#8888b8" text-anchor="middle" class="t" transform="scale(0.95 1.07)">A</text>
<text x="938.84" y="475.33" font-size="13" fill="#8888b8" stroke="#8888b8" text-anchor="middle" class="t" transform="scale(0.95 1.07)">C</text>
<text x="976.74" y="475.33" font-size="13" fill="#8888b8" stroke="#8888b8" text-anchor="middle" class="t" transform="scale(0.95 1.07)">T</text>
<text x="151.8" y="524.3" font-size="13" fill="#126412" stroke="#126412" text-anchor="end" transform="matrix(1 0 0 1.055 0 -28.84)">Chicken</text>
<text x="171.9" y="525.3" font-size="13" fill="#8888b8" stroke="#8888b8" text-anchor="middle" class="t" transform="matrix(1 0 0 1.055 0 -28.89)">=</text>
<text x="207.9" y="525.3" font-size="13" fill="#8888b8" stroke="#8888b8" text-anchor="middle" class="t" transform="matrix(1 0 0 1.055 0 -28.89)">=</text>
<text x="243.9" y="525.3" font-size="13" fill="#8888b8" stroke="#8888b8" text-anchor="middle" class="t" transform="matrix(1 0 0 1.055 0 -28.89)">=</text>
<text x="279.9" y="525.3" font-size="13" fill="#8888b8" stroke="#8888b8" text-anchor="middle" class="t" transform="matrix(1 0 0 1.055 0 -28.89)">=</text>
<text x="315.9" y="525.3" font-size="13" fill="#8888b8" stroke="#8888b8" text-anchor="middle" class="t" transform="matrix(1 0 0 1.055 0 -28.89)">=</text>
<text x="351.9" y="525.3" font-size="13" fill="#8888b8" stroke="#8888b8" text-anchor="middle" class="t" transform="matrix(1 0 0 1.055 0 -28.89)">=</text>
<text x="387.9" y="525.3" font-size="13" fill="#8888b8" stroke="#8888b8" text-anchor="middle" class="t" transform="matrix(1 0 0 1.055 0 -28.89)">=</text>
<text x="423.9" y="525.3" font-size="13" fill="#8888b8" stroke="#8888b8" text-anchor="middle" class="t" transform="matrix(1 0 0 1.055 0 -28.89)">=</text>
<text x="459.9" y="525.3" font-size="13" fill="#8888b8" stroke="#8888b8" text-anchor="middle" class="t" transform="matrix(1 0 0 1.055 0 -28.89)">=</text>
<text x="495.9" y="525.3" font-size="13" fill="#8888b8" stroke="#8888b8" text-anchor="middle" class="t" transform="matrix(1 0 0 1.055 0 -28.89)">=</text>
<text x="531.9" y="525.3" font-size="13" fill="#8888b8" stroke="#8888b8" text-anchor="middle" class="t" transform="matrix(1 0 0 1.055 0 -28.89)">=</text>
<text x="567.9" y="525.3" font-size="13" fill="#8888b8" stroke="#8888b8" text-anchor="middle" class="t" transform="matrix(1 0 0 1.055 0 -28.89)">=</text>
<text x="603.9" y="525.3" font-size="13" fill="#8888b8" stroke="#8888b8" text-anchor="middle" class="t" transform="matrix(1 0 0 1.055 0 -28.89)">=</text>
<text x="639.9" y="525.3" font-size="13" fill="#8888b8" stroke="#8888b8" text-anchor="middle" class="t" transform="matrix(1 0 0 1.055 0 -28.89)">=</text>
<text x="675.9" y="525.3" font-size="13" fill="#8888b8" stroke="#8888b8" text-anchor="middle" class="t" transform="matrix(1 0 0 1.055 0 -28.89)">=</text>
<text x="711.9" y="525.3" font-size="13" fill="#8888b8" stroke="#8888b8" text-anchor="middle" class="t" transform="matrix(1 0 0 1.055 0 -28.89)">=</text>
<text x="747.9" y="525.3" font-size="13" fill="#8888b8" stroke="#8888b8" text-anchor="middle" class="t" transform="matrix(1 0 0 1.055 0 -28.89)">=</text>
<text x="783.9" y="525.3" font-size="13" fill="#8888b8" stroke="#8888b8" text-anchor="middle" class="t" transform="matrix(1 0 0 1.055 0 -28.89)">=</text>
<text x="819.9" y="525.3" font-size="13" fill="#8888b8" stroke="#8888b8" text-anchor="middle" class="t" transform="matrix(1 0 0 1.055 0 -28.89)">=</text>
<text x="855.9" y="525.3" font-size="13" fill="#8888b8" stroke="#8888b8" text-anchor="middle" class="t" transform="matrix(1 0 0 1.055 0 -28.89)">=</text>
<text x="891.9" y="525.3" font-size="13" fill="#8888b8" stroke="#8888b8" text-anchor="middle" class="t" transform="matrix(1 0 0 1.055 0 -28.89)">=</text>
<text x="927.9" y="525.3" font-size="13" fill="#8888b8" stroke="#8888b8" text-anchor="middle" class="t" transform="matrix(1 0 0 1.055 0 -28.89)">=</text>
<text x="151.8" y="539.3" font-size="13" fill="#0c0c70" stroke="#0c0c70" text-anchor="end" transform="matrix(1 0 0 1.055 0 -29.66)">X_tropicalis</text>
<text x="171.9" y="540.3" font-size="13" fill="#8888b8" stroke="#8888b8" text-anchor="middle" class="t" transform="matrix(1 0 0 1.055 0 -29.72)">=</text>
<text x="207.9" y="540.3" font-size="13" fill="#8888b8" stroke="#8888b8" text-anchor="middle" class="t" transform="matrix(1 0 0 1.055 0 -29.72)">=</text>
<text x="243.9" y="540.3" font-size="13" fill="#8888b8" stroke="#8888b8" text-anchor="middle" class="t" transform="matrix(1 0 0 1.055 0 -29.72)">=</text>
<text x="279.9" y="540.3" font-size="13" fill="#8888b8" stroke="#8888b8" text-anchor="middle" class="t" transform="matrix(1 0 0 1.055 0 -29.72)">=</text>
<text x="315.9" y="540.3" font-size="13" fill="#8888b8" stroke="#8888b8" text-anchor="middle" class="t" transform="matrix(1 0 0 1.055 0 -29.72)">=</text>
<text x="351.9" y="540.3" font-size="13" fill="#8888b8" stroke="#8888b8" text-anchor="middle" class="t" transform="matrix(1 0 0 1.055 0 -29.72)">=</text>
<text x="387.9" y="540.3" font-size="13" fill="#8888b8" stroke="#8888b8" text-anchor="middle" class="t" transform="matrix(1 0 0 1.055 0 -29.72)">=</text>
<text x="423.9" y="540.3" font-size="13" fill="#8888b8" stroke="#8888b8" text-anchor="middle" class="t" transform="matrix(1 0 0 1.055 0 -29.72)">=</text>
<text x="459.9" y="540.3" font-size="13" fill="#8888b8" stroke="#8888b8" text-anchor="middle" class="t" transform="matrix(1 0 0 1.055 0 -29.72)">=</text>
<text x="495.9" y="540.3" font-size="13" fill="#8888b8" stroke="#8888b8" text-anchor="middle" class="t" transform="matrix(1 0 0 1.055 0 -29.72)">=</text>
<text x="531.9" y="540.3" font-size="13" fill="#8888b8" stroke="#8888b8" text-anchor="middle" class="t" transform="matrix(1 0 0 1.055 0 -29.72)">=</text>
<text x="567.9" y="540.3" font-size="13" fill="#8888b8" stroke="#8888b8" text-anchor="middle" class="t" transform="matrix(1 0 0 1.055 0 -29.72)">=</text>
<text x="603.9" y="540.3" font-size="13" fill="#8888b8" stroke="#8888b8" text-anchor="middle" class="t" transform="matrix(1 0 0 1.055 0 -29.72)">=</text>
<text x="639.9" y="540.3" font-size="13" fill="#8888b8" stroke="#8888b8" text-anchor="middle" class="t" transform="matrix(1 0 0 1.055 0 -29.72)">=</text>
<text x="675.9" y="540.3" font-size="13" fill="#8888b8" stroke="#8888b8" text-anchor="middle" class="t" transform="matrix(1 0 0 1.055 0 -29.72)">=</text>
<text x="711.9" y="540.3" font-size="13" fill="#8888b8" stroke="#8888b8" text-anchor="middle" class="t" transform="matrix(1 0 0 1.055 0 -29.72)">=</text>
<text x="747.9" y="540.3" font-size="13" fill="#8888b8" stroke="#8888b8" text-anchor="middle" class="t" transform="matrix(1 0 0 1.055 0 -29.72)">=</text>
<text x="783.9" y="540.3" font-size="13" fill="#8888b8" stroke="#8888b8" text-anchor="middle" class="t" transform="matrix(1 0 0 1.055 0 -29.72)">=</text>
<text x="819.9" y="540.3" font-size="13" fill="#8888b8" stroke="#8888b8" text-anchor="middle" class="t" transform="matrix(1 0 0 1.055 0 -29.72)">=</text>
<text x="855.9" y="540.3" font-size="13" fill="#8888b8" stroke="#8888b8" text-anchor="middle" class="t" transform="matrix(1 0 0 1.055 0 -29.72)">=</text>
<text x="891.9" y="540.3" font-size="13" fill="#8888b8" stroke="#8888b8" text-anchor="middle" class="t" transform="matrix(1 0 0 1.055 0 -29.72)">=</text>
<text x="927.9" y="540.3" font-size="13" fill="#8888b8" stroke="#8888b8" text-anchor="middle" class="t" transform="matrix(1 0 0 1.055 0 -29.72)">=</text>
<text x="151.8" y="554.3" font-size="13" fill="#126412" stroke="#126412" text-anchor="end" transform="matrix(1 0 0 1.055 0 -30.49)">Zebrafish</text>
<text x="336" y="433.2" font-size="11" fill="#e08a10" stroke="#e08a10" text-anchor="middle" class="t" transform="matrix(1 0 0 1.055 0 -23.83)">1</text>
<rect x="336" y="451" width="1" height="14" fill="#e08a10" shape-rendering="crispEdges"/>
<text x="440.76" y="570.0" font-size="13" fill="#000" stroke="#000" textLength="223.07" lengthAdjust="spacingAndGlyphs" transform="matrix(1 0 0 1.055 0 -31.35)">Repeating Elements by RepeatMasker</text>
<text x="151.8" y="584.5" font-size="13" fill="#000" stroke="#000" text-anchor="end" transform="matrix(1 0 0 1.055 0 -32.15)">RepeatMasker</text>
<rect x="156" y="572" width="793" height="15" fill="#000" shape-rendering="crispEdges"/>
</svg>
</body></html>
